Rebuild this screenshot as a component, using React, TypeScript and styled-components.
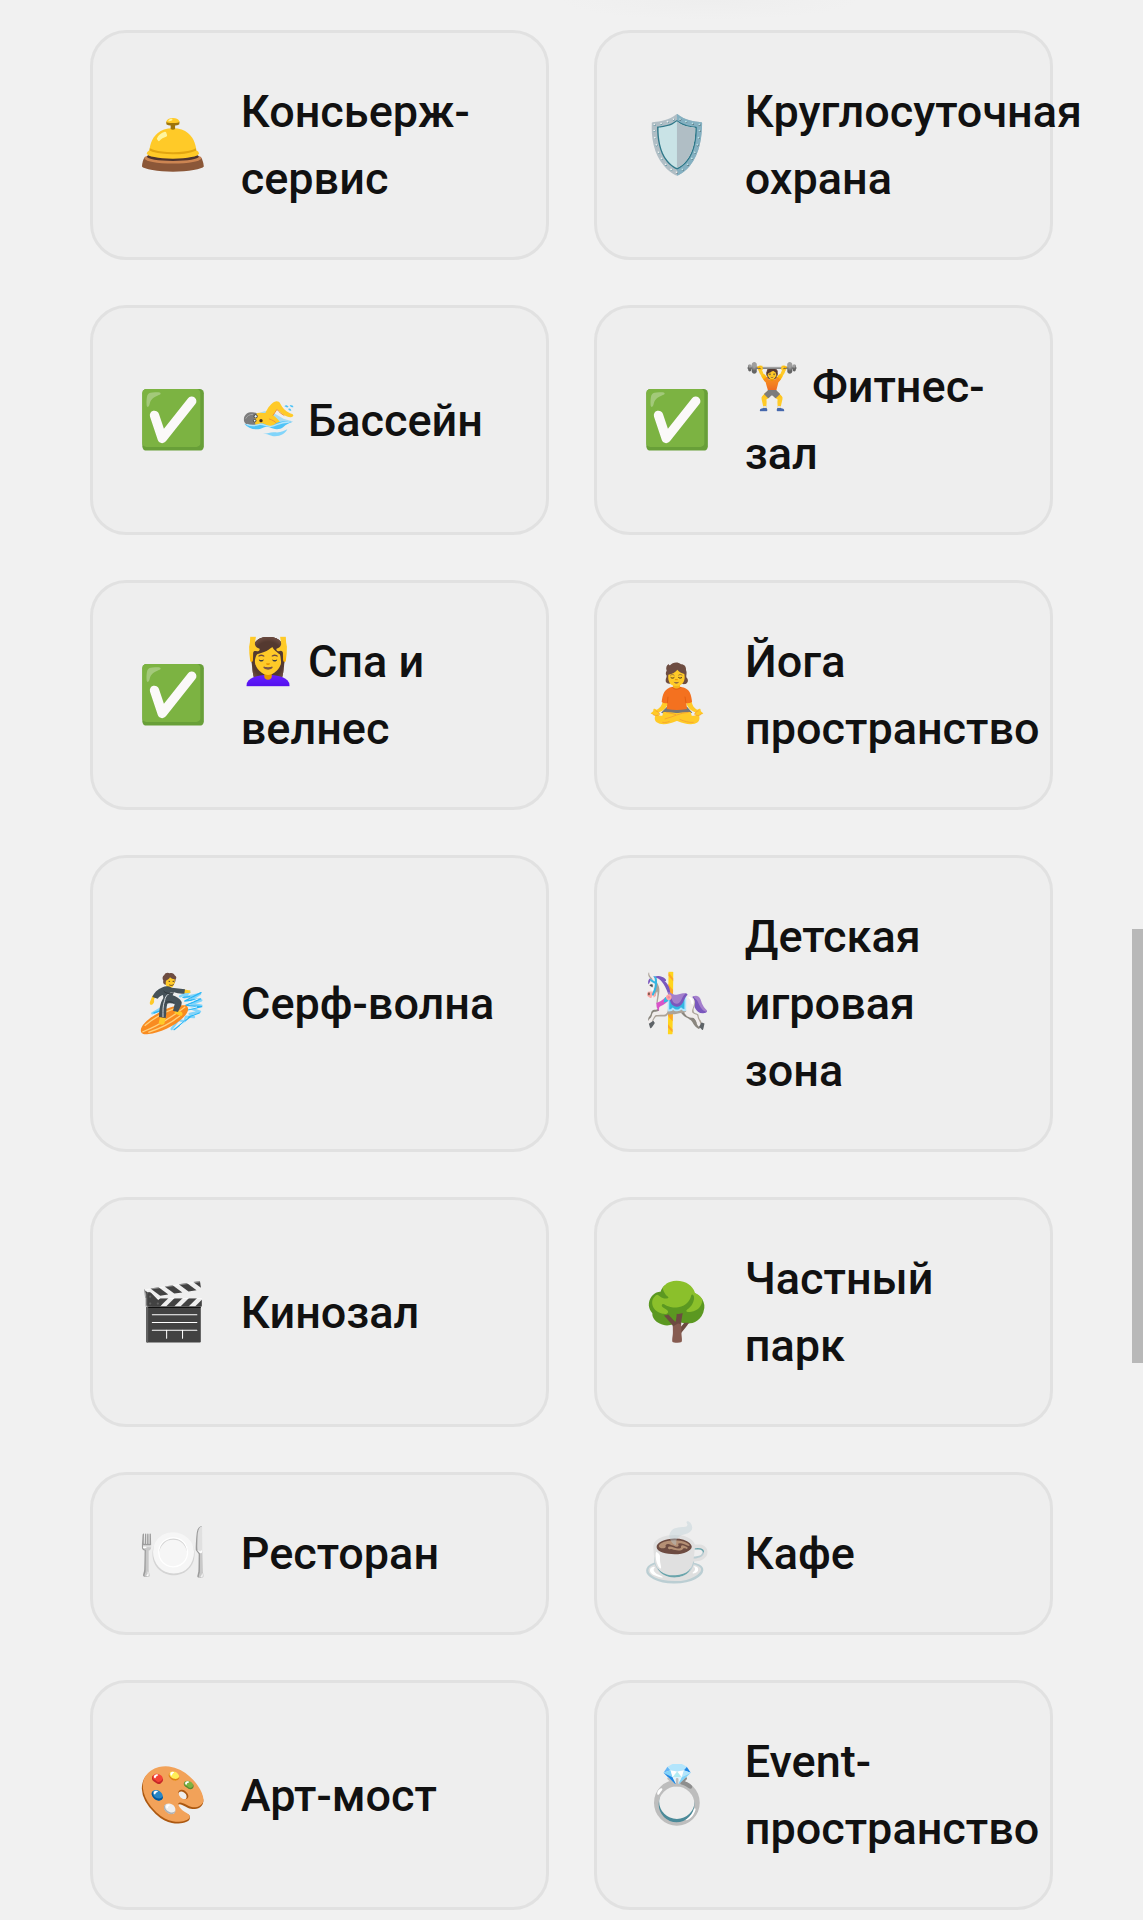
import React from "react";
import styled, { createGlobalStyle } from "styled-components";

function SwimmerIcon() {
  return (
    <InlineDrawing viewBox="333 69 168 168" role="img" aria-label="Пловец">
      <path
        d="M386 134c12-8 24-8 38-6l38 22 22 6-24 14-74-4z"
        fill="#4fc3f7"
        opacity=".45"
      />
      <path
        d="M374 136c14-8 24-4 32-4 4-10 14-26 26-33 8-4 15-3 19 5 5 11 16 23 29 29 7 2 12 4 9 9-5 6-20 1-27-4-8-5-16-12-21-17l-12 18c10 7 18 15 24 25l-26 8c-18-2-32-4-48-2-11-5-14-25-5-34z"
        fill="#ffca28"
      />
      <path
        d="M429 139l12-18c5 7 12 13 21 18M418 150c10 3 18 8 23 14"
        fill="none"
        stroke="#f19534"
        strokeWidth="3"
        strokeLinecap="round"
      />
      <path
        d="M342 156c-2-14 6-24 19-26 8-1 16 0 20 4-9 7-9 23-4 34-13 5-32 1-35-12z"
        fill="#7c7c7c"
      />
      <path d="M347 149c4-8 11-13 22-13" stroke="#a6a6a6" strokeWidth="3" fill="none" />
      <circle cx="377" cy="142" r="5" fill="#e8f5f9" stroke="#424242" strokeWidth="3" />
      <circle cx="374" cy="155" r="4" fill="#e8f5f9" stroke="#424242" strokeWidth="3" />
      <circle cx="393" cy="155" r="5" fill="#422b1d" />
      <path
        d="M343 164c13 4 22 7 34 4 12-5 20-7 31-1 14 8 23 2 30-4 16-9 36-6 51-5-12 4-22 9-28 15-14 12-31 7-42 2-13-5-18 2-29 5-17 3-37-2-47-16z"
        fill="#4fc3f7"
      />
      <path
        d="M350 166c14 5 27 4 38 0 13-2 21 7 35 6 17-2 25-14 56-13"
        fill="none"
        stroke="#b3e5fc"
        strokeWidth="4"
      />
      <path
        d="M399 195c15-1 22-6 35-5 18 2 28-4 38-9-6 12-19 21-37 21-13 0-19-8-36-7z"
        fill="#81d4fa"
      />
      <path
        d="M463 112c4-6 9-3 13 1-4 5-8 1-13-1zM479 108c7 0 12 2 11 7-5 0-9-1-11-7zM475 119c7-2 8 2 9 6-6 0-9-2-9-6z"
        fill="#4fc3f7"
      />
    </InlineDrawing>
  );
}

function YogaIcon() {
  return (
    <Drawing viewBox="36 36 210 210" role="img" aria-label="Йога">
      <path
        d="M110 68c-3-8-1-16 6-20 1 3 2 4 4 4 7-9 23-12 33-3 10 0 16 7 15 17 4 8 0 15 1 22 5 5 7 12 2 17-5 5-13 4-20 1h-26c-9 3-19 0-18-9 0-6 3-9 3-14-4-5-3-10 0-15z"
        fill="#6d4c41"
      />
      <path d="M129 104h21v18c-7 8-14 8-21 0z" fill="#f5b51d" />
      <path
        d="M115 80c12-2 21-7 27-15 5 7 13 10 21 13 4 19-3 36-24 36-20 0-26-15-24-34z"
        fill="#ffca28"
      />
      <path
        d="M121 82c4-3 8-3 12 0M145 82c4-3 8-3 12 0"
        fill="none"
        stroke="#6d4c41"
        strokeWidth="2"
      />
      <path
        d="M122 88c3 3 8 3 11 0M145 88c3 3 8 3 11 0"
        fill="none"
        stroke="#422b1d"
        strokeWidth="3"
      />
      <path d="M136 95h6" stroke="#e59600" strokeWidth="3" strokeLinecap="round" />
      <path d="M131 101c5 2 11 2 16 0-3 7-12 7-16 0z" fill="#795548" />
      <path
        d="M99 155l17 4c-3 17-15 31-33 35-8 3-17 8-21 2 4-4 9-5 8-10 0-5 5-5 9-1 12-4 18-15 20-30zM184 155l-17 4c3 17 15 31 33 35 8 3 16 8 20 2-4-4-9-5-8-10 0-5-5-5-9-1-12-4-17-15-19-30z"
        fill="#ffca28"
      />
      <path d="M111 176h60l16 18-46 14-48-14z" fill="#757575" />
      <path
        d="M127 116c7 7 17 7 25 0 12 3 23 7 27 17 5 10 6 20 7 29-7 4-12 4-17 3l2 18c-20 4-40 4-61 0l2-18c-6 2-11 1-17-3 1-10 3-21 8-30 5-9 13-13 24-16z"
        fill="#f4711f"
      />
      <path
        d="M112 166l2-20M168 165l-3-19M126 117c8 9 19 9 27 0"
        fill="none"
        stroke="#d9560d"
        strokeWidth="2"
      />
      <path
        d="M100 192c28-2 52 6 76 11 12 1 22 0 29-6 5 8 5 20-2 26-8 7-26 7-41 3-22-6-42-17-66-19z"
        fill="#ffca28"
      />
      <path
        d="M182 192c-28-2-52 6-76 11-12 1-19 0-27-6-6 8-7 20 1 26 9 7 25 7 40 3 22-6 42-17 66-19z"
        fill="#ffca28"
      />
      <path
        d="M104 213c28-7 46-19 72-20M108 193c10 1 20 4 30 7M149 214c15 6 26 10 42 9M97 223c8 1 15 0 22-3"
        fill="none"
        stroke="#f19534"
        strokeWidth="2"
      />
      <path
        d="M76 188c7 3 12 5 13 11-8 5-17 5-22-2M206 188c-6 2-11 5-12 11 7 5 15 5 21-2"
        fill="#ffca28"
        stroke="#f19534"
        strokeWidth="2"
      />
    </Drawing>
  );
}

function SurferIcon() {
  return (
    <Drawing viewBox="24 30 210 210" role="img" aria-label="Сёрфинг">
      <g fill="none" strokeLinecap="round" strokeLinejoin="round">
        <path
          d="M67 163l34-20M150 112l28-13-15 16 47-10-25 16 29 3-30 11 30 5-30 9 26 9-31 7 13 9-24-1-5 14-18-4-20 27"
          stroke="#81d4fa"
          strokeWidth="7"
        />
        <path
          d="M213 101l-49 25 48-6-45 19 48 4-45 10M180 174l-48 38M208 162l-32 12M72 162l29-10M159 115l20-2"
          stroke="#29b6f6"
          strokeWidth="4"
        />
        <path d="M204 120l-33 12M200 144l-27 6M165 188l-14 12" stroke="#e1f5fe" strokeWidth="3" />
      </g>
      <path
        d="M35 222c-10-12 10-36 35-51 33-23 72-35 96-32 14 6 9 22-7 37-24 25-73 46-103 49-10 2-17 1-21-3z"
        fill="#f98b20"
      />
      <path
        d="M37 219c34-13 77-36 129-76M44 200c28-23 61-42 96-54M55 220c37-12 70-29 95-50"
        fill="none"
        stroke="#ffd17c"
        strokeWidth="4"
      />
      <path
        d="M100 65c-4-6-3-14 3-17 2-7 11-8 16-5 7-3 14 1 15 6 6 3 6 9 3 12 0 8-4 14-9 17l-21-1c-7-1-9-7-7-12z"
        fill="#6d4c41"
      />
      <path
        d="M108 65c5-2 9-5 12-10 4 4 8 5 14 6 1 13-3 25-13 26-11 0-16-9-13-22z"
        fill="#ffca28"
      />
      <path
        d="M117 67h2M129 67h2M119 78c4 2 8 2 11-1"
        fill="none"
        stroke="#543930"
        strokeWidth="3"
        strokeLinecap="round"
      />
      <path
        d="M77 108l-5 15c2 8-3 14-9 15-5-2-4-8-2-12l7-17zM160 91l16 3c6-1 8 2 3 4l4 3-22 2z"
        fill="#ffca28"
      />
      <path
        d="M90 175l17 3-3 12c1 9-14 10-18 2zM136 152l14 5c9 2 10 12 3 14l-20-8z"
        fill="#ffca28"
      />
      <path
        d="M98 85c9-5 19-3 27 1 14 1 27 3 40 5l-2 13c-13 1-22-1-31-4l-4 9c10 3 22 10 27 20 1 11-7 20-11 30l-15-4 5-20c-8-3-15-3-22-1-4 13-2 27-5 43l-20-3c1-21 2-40 13-57l-1-9c-6 2-11 4-16 11l-16-5c5-12 15-23 31-29z"
        fill="#455158"
      />
      <path
        d="M132 101c-17 0-25 8-28 23-6 16-5 30-5 50"
        fill="none"
        stroke="#d5dade"
        strokeWidth="3"
      />
      <path
        d="M101 96c6 7 17 10 30 5M106 132c8-6 16-5 25 0"
        fill="none"
        stroke="#2f373b"
        strokeWidth="3"
      />
    </Drawing>
  );
}

const amenities: { icon: React.ReactNode; title: React.ReactNode }[] = [
  { icon: "🛎️", title: "Консьерж-сервис" },
  { icon: "🛡️", title: "Круглосуточная охрана" },
  {
    icon: "✅",
    title: (
      <>
        <SwimmerIcon /> Бассейн
      </>
    ),
  },
  { icon: "✅", title: "🏋️ Фитнес-зал" },
  { icon: "✅", title: "💆‍♀️ Спа и велнес" },
  { icon: <YogaIcon />, title: "Йога пространство" },
  { icon: <SurferIcon />, title: "Серф-волна" },
  { icon: "🎠", title: "Детская игровая зона" },
  { icon: "🎬", title: "Кинозал" },
  { icon: "🌳", title: "Частный парк" },
  { icon: "🍽️", title: "Ресторан" },
  { icon: "☕", title: "Кафе" },
  { icon: "🎨", title: "Арт-мост" },
  { icon: "💍", title: "Event-пространство" },
];

export default function App() {
  return (
    <>
      <GlobalStyle />
      <Page>
        <AmenityGrid>
          {amenities.map((amenity, index) => (
            <AmenityCard key={index}>
              <AmenityIcon>{amenity.icon}</AmenityIcon>
              <AmenityTitle>{amenity.title}</AmenityTitle>
            </AmenityCard>
          ))}
        </AmenityGrid>
      </Page>
      <ScrollThumb />
    </>
  );
}

const GlobalStyle = createGlobalStyle`
  *,
  *::before,
  *::after {
    box-sizing: border-box;
  }

  body {
    margin: 0;
    background: #f1f1f1;
    color: #111;
    font-family: Roboto, "Noto Color Emoji", sans-serif;
    overflow-x: hidden;
  }
`;

const Page = styled.main`
  padding: 30px 90px 8px;
  background: radial-gradient(ellipse 150px 20px at 62% 0, #eeeeee, #f1f1f1);
`;

const AmenityGrid = styled.ul`
  display: grid;
  grid-template-columns: repeat(2, minmax(0, 1fr));
  gap: 45px;
  margin: 0;
  padding: 0;
  list-style: none;
`;

const AmenityCard = styled.li`
  display: flex;
  align-items: center;
  gap: 33px;
  padding: 45px;
  border: 3px solid #e1e1e1;
  border-radius: 36px;
  background: #eeeeee;
`;

const AmenityIcon = styled.span`
  display: flex;
  flex-shrink: 0;
  font-size: 56px;
  line-height: 67px;
`;

const AmenityTitle = styled.span`
  font-size: 45px;
  font-weight: 500;
  line-height: 67px;
`;

const Drawing = styled.svg`
  width: 70px;
  height: 70px;
`;

const InlineDrawing = styled.svg`
  width: 56px;
  height: 56px;
  vertical-align: -12px;
`;

const ScrollThumb = styled.div`
  position: fixed;
  top: 929px;
  right: 0;
  width: 11px;
  height: 434px;
  background: #b8b8b8;
`;
